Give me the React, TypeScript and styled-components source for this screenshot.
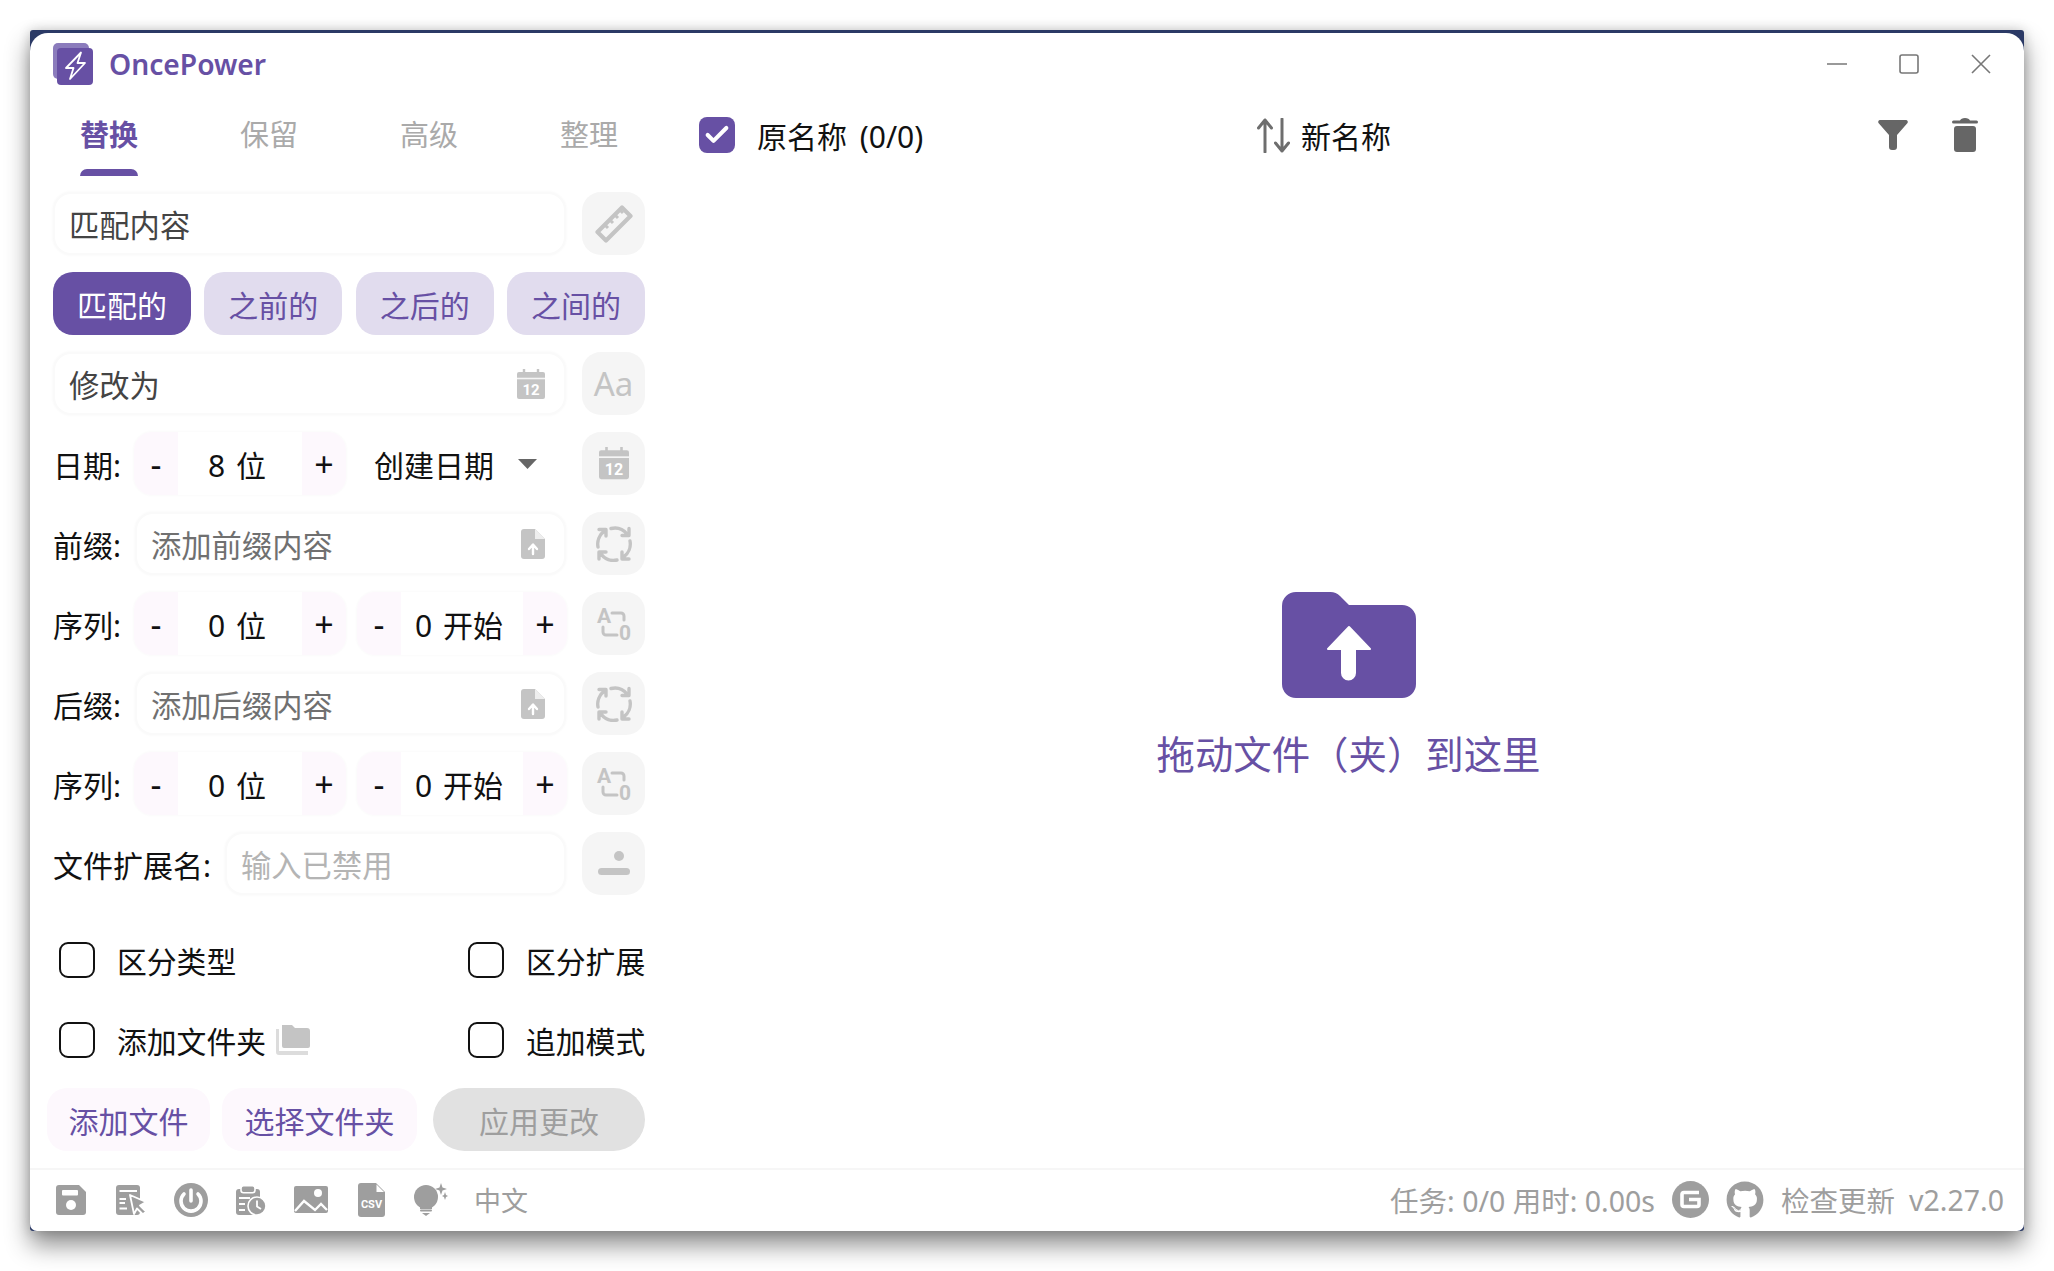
import React from 'react'
import styled, { createGlobalStyle } from 'styled-components'
import { FaGithub } from 'react-icons/fa'
import { Check } from 'lucide-react'

const PURPLE = '#6750a4'
const ICON_GREY = '#c4c4c4'
const FOOT_GREY = '#9e9e9e'
const ROW_HEIGHT = '63px'
const UI_FONT = '"Noto Sans", "Noto Sans CJK SC", sans-serif'


const GlobalStyle = createGlobalStyle`
  html, body {
    margin: 0;
    height: 1271px;
    overflow: hidden;
    background: #fff;
    font-family: ${UI_FONT};
  }
  * { box-sizing: border-box; }
`

const Desktop = styled.div`
  padding: 30px;
  height: 1271px;
`

const Frame = styled.div`
  display: flex;
  height: 1201px;
  width: 1994px;
  padding-top: 3px;
  background: #2b3a66;
  border-radius: 3px;
  box-shadow: 0 14px 24px rgba(0, 0, 0, .45), 0 0 12px rgba(0, 0, 0, .18);
`

const Win = styled.div`
  flex: 1;
  display: flex;
  flex-direction: column;
  background: #fff;
  border-radius: 18px 18px 7px 7px;
  overflow: hidden;
`

const TitleBar = styled.header`
  height: 62px;
  flex: none;
  display: flex;
  align-items: center;
  padding: 0 7px 0 23px;
`

const AppName = styled.span`
  margin-left: 16px;
  font-size: 28.2px;
  font-weight: 600;
  color: ${PURPLE};
`

const WinControls = styled.div`
  margin-left: auto;
  display: flex;
`

const WinButton = styled.span`
  width: 72px;
  height: 40px;
  display: flex;
  align-items: center;
  justify-content: center;
`

const Main = styled.div`
  flex: 1;
  display: flex;
  min-height: 0;
`

const Sidebar = styled.aside`
  flex: none;
  width: 615px;
  padding-left: 23px;
  display: flex;
  flex-direction: column;
  gap: 17px;
`

const Tabs = styled.nav`
  display: flex;
  flex: none;
  height: 81px;
  margin: 0 0 -1px -24px;
`

const Tab = styled.div<{ $active?: boolean }>`
  flex: none;
  width: 160px;
  display: flex;
  flex-direction: column;
  align-items: center;
  justify-content: flex-end;
  font-size: 29px;
  line-height: 40px;
  font-weight: ${p => (p.$active ? 700 : 400)};
  color: ${p => (p.$active ? PURPLE : '#aaa')};
`

const TabBar = styled.span<{ $on?: boolean }>`
  width: 58px;
  height: 7px;
  margin-top: 14px;
  border-radius: 7px 7px 0 0;
  background: ${p => (p.$on ? PURPLE : 'transparent')};
`

const Row = styled.div`
  display: flex;
  align-items: center;
  gap: 16px;
  height: ${ROW_HEIGHT};
`

const RowMain = styled.div`
  width: 513px;
  height: 100%;
  display: flex;
  align-items: center;
`

const Label = styled.span`
  flex: none;
  width: 82px;
  font-size: 30px;
  color: #111;
  white-space: nowrap;
`

const WideLabel = styled(Label)`
  width: 172px;
`

const Field = styled.div`
  flex: 1;
  height: 100%;
  display: flex;
  align-items: center;
  justify-content: space-between;
  padding: 0 19px 0 14px;
  background: #fff;
  border: 2px solid #fafafa;
  border-radius: 18px;
  box-shadow: 0 0 3px rgba(0, 0, 0, .04);
`

const FieldText = styled.span<{ $tone?: 'value' | 'hint' | 'off' }>`
  font-size: 30.3px;
  color: ${p => (p.$tone === 'off' ? '#b4b4b4' : p.$tone === 'hint' ? '#707070' : '#444')};
`

const SquareBtn = styled.div`
  flex: none;
  width: 63px;
  height: 63px;
  display: flex;
  align-items: center;
  justify-content: center;
  background: #f5f5f5;
  border-radius: 19px;
  color: ${ICON_GREY};
  font-size: 33px;
`

const Modes = styled.div`
  display: flex;
  justify-content: space-between;
  height: ${ROW_HEIGHT};
`

const Mode = styled.div<{ $active?: boolean }>`
  width: 138px;
  display: flex;
  align-items: center;
  justify-content: center;
  border-radius: 20px;
  font-size: 30px;
  background: ${p => (p.$active ? PURPLE : '#e1dcee')};
  color: ${p => (p.$active ? '#fff' : PURPLE)};
`

const StepperBox = styled.div`
  flex: none;
  width: 212px;
  height: 100%;
  margin-left: -1px;
  display: flex;
  align-items: center;
  border-radius: 18px;
  overflow: hidden;
  background: #fff;
  box-shadow: 0 0 3px rgba(0, 0, 0, .04);
  color: #111;
  font-size: 30px;
  word-spacing: 3px;
`

const StepButton = styled.span`
  flex: none;
  width: 44px;
  height: 100%;
  display: flex;
  align-items: center;
  justify-content: center;
  background: #fdf8fd;
  font-size: 34px;
`

const StepValue = styled.span`
  flex: 1;
  padding-right: 6px;
  text-align: center;
  white-space: nowrap;
`

const SecondStepper = styled(StepperBox)`
  width: 210px;
  margin-left: 11px;
`

const DateSelect = styled.div`
  flex: 1;
  display: flex;
  align-items: center;
  padding-left: 28px;
  font-size: 30px;
  color: #111;
  gap: 24px;
`

const OptionGrid = styled.div`
  margin-top: 16px;
  display: grid;
  grid-template-columns: 409px 1fr;
  row-gap: 17px;
`

const Option = styled.label`
  height: ${ROW_HEIGHT};
  display: flex;
  align-items: center;
  gap: 22px;
  padding-left: 6px;
  font-size: 29.8px;
  color: #111;
  white-space: nowrap;
`

const Box = styled.span`
  flex: none;
  width: 36px;
  height: 36px;
  border: 2.5px solid #111;
  border-radius: 9px;
`

const OptionIcon = styled.span`
  display: flex;
  margin-left: -12px;
`

const Actions = styled.div`
  height: ${ROW_HEIGHT};
  display: flex;
  margin-left: -6px;
  gap: 12px;
`

const ActionBtn = styled.div<{ $width: number }>`
  width: ${p => p.$width}px;
  display: flex;
  align-items: center;
  justify-content: center;
  border-radius: 20px;
  background: #fdf8fd;
  color: ${PURPLE};
  font-size: 30px;
`

const ApplyBtn = styled.div`
  width: 212px;
  margin-left: 4px;
  display: flex;
  align-items: center;
  justify-content: center;
  border-radius: 32px;
  background: #e1e1e1;
  color: #9e9e9e;
  font-size: 30px;
`

const Content = styled.section`
  flex: 1;
  display: flex;
  flex-direction: column;
  min-width: 0;
`

const ListHead = styled.div`
  height: 81px;
  flex: none;
  display: flex;
  align-items: flex-start;
  padding: 22px 46px 0 54px;
`

const HeadCol = styled.div`
  display: flex;
  align-items: center;
  height: 36px;
  font-size: 30px;
  color: #111;
`

const OriginCol = styled(HeadCol)`
  width: 558px;
  gap: 22px;
  word-spacing: 5px;
`

const NewCol = styled(HeadCol)`
  flex: 1;
  gap: 11px;
`

const HeadTools = styled(HeadCol)`
  gap: 44px;
`

const CheckedBox = styled.span`
  width: 36px;
  height: 36px;
  display: flex;
  align-items: center;
  justify-content: center;
  border-radius: 8px;
  background: ${PURPLE};
`

const DropZone = styled.div`
  flex: 1;
  display: flex;
  flex-direction: column;
  align-items: center;
  justify-content: center;
  padding: 27px 0 0 28px;
  gap: 26px;
  color: ${PURPLE};
  font-size: 38.4px;
`

const Footer = styled.footer`
  flex: none;
  height: 63px;
  display: flex;
  align-items: center;
  padding: 0 20px 2px 11px;
  border-top: 2px solid #f6f6f6;
  color: ${FOOT_GREY};
  font-size: 28.5px;
`

const FootIcon = styled.span`
  width: 60px;
  display: flex;
  justify-content: center;
`

const Lang = styled.span`
  margin-left: 13px;
  font-size: 27px;
`

const FootRight = styled.div`
  margin-left: auto;
  display: flex;
  align-items: center;
  gap: 17px;
`

const Version = styled.span`
  margin-left: -3px;
`


function LogoIcon() {
  return (
    <svg width="40" height="42" viewBox="0 0 40 42">
      <rect x="0" y="0" width="36" height="36" rx="5" fill="#8b7cbc" />
      <rect x="4" y="5" width="36" height="37" rx="4" fill={PURPLE} />
      <path d="M28 9.5 L13 25 H20.5 L17 36 L32 20 H24.5 Z" fill="none" stroke="#fff" strokeWidth="1.8" strokeLinejoin="round" />
    </svg>
  )
}

function CalendarIcon({ size = 28 }: { size?: number }) {
  return (
    <svg width={size} height={size * 30 / 28} viewBox="0 0 28 30">
      <rect x="0" y="3" width="28" height="27" rx="2" fill={ICON_GREY} />
      <path d="M0 9.5 H28" stroke="#f5f5f5" strokeWidth="1.6" />
      <path d="M7 0 V6 M21 0 V6" stroke={ICON_GREY} strokeWidth="2.4" />
      <text x="14" y="26" textAnchor="middle" fontSize="15" fontWeight="700" fontFamily="Roboto, sans-serif" fill="#fff">12</text>
    </svg>
  )
}

function RulerIcon() {
  return (
    <svg width="38" height="38" viewBox="0 0 38 38" fill="none" stroke={ICON_GREY} strokeWidth="4.2" strokeLinejoin="round">
      <path d="M2.5 27 L27 2.5 L35.5 11 L11 35.5 Z" />
      <path d="M10 20 L13 23 M15 15 L18 18 M20 10 L23 13 M25 5 L28 8" strokeWidth="3" />
    </svg>
  )
}

function FileUpIcon() {
  return (
    <svg width="24" height="30" viewBox="0 0 24 30">
      <path d="M3 0 H14 L24 10 V27 A3 3 0 0 1 21 30 H3 A3 3 0 0 1 0 27 V3 A3 3 0 0 1 3 0 Z" fill={ICON_GREY} />
      <path d="M14 0 V10 H24 Z" fill="#eee" />
      <path d="M12 25 V16 M8 20 L12 15.5 L16 20" stroke="#fff" strokeWidth="2.4" fill="none" strokeLinecap="round" strokeLinejoin="round" />
    </svg>
  )
}

function CycleIcon() {
  return (
    <svg width="36" height="36" viewBox="0 0 36 36" fill="none" stroke={ICON_GREY} strokeWidth="3.4" strokeLinecap="round" strokeLinejoin="round">
      <path d="M15 2.5 A16 16 0 0 1 31 8 M33 2.5 V9.5 H26" />
      <path d="M2 21 A16 16 0 0 1 8.5 5 M3 3.5 H10 V10" />
      <path d="M21 34 A16 16 0 0 1 5 28 M3 33 V26 H10" />
      <path d="M34 15 A16 16 0 0 1 27.5 31 M33 33 H26 V26" />
    </svg>
  )
}

// the viewBox leaves room around the letters so their line boxes stay inside
function SequenceIcon() {
  return (
    <svg width="38" height="48" viewBox="-2 -6 38 48" fill="none" stroke={ICON_GREY} strokeWidth="3" strokeLinecap="round">
      <text x="0" y="17" fontSize="21" fontWeight="700" fontFamily="Roboto, sans-serif" fill={ICON_GREY} stroke="none">A</text>
      <path d="M15 7 H24 A3 3 0 0 1 27 10 V14" />
      <path d="M6 21 V26 A3 3 0 0 0 9 29 H20" />
      <text x="22" y="34" fontSize="21" fontWeight="700" fontFamily="Roboto, sans-serif" fill={ICON_GREY} stroke="none">0</text>
    </svg>
  )
}

function ExtIcon() {
  return (
    <svg width="34" height="26" viewBox="0 0 34 26" fill={ICON_GREY}>
      <circle cx="22" cy="5" r="5" />
      <rect x="1" y="17" width="32" height="7" rx="3.5" />
    </svg>
  )
}

function FoldersIcon() {
  return (
    <svg width="34" height="30" viewBox="0 0 34 30" fill={ICON_GREY}>
      <path d="M6 0 H16 L19 3 H31 A3 3 0 0 1 34 6 V21 A2 2 0 0 1 32 23 H8 A2 2 0 0 1 6 21 Z" />
      <path d="M0 4 H3 V26 H32 V30 H3 A3 3 0 0 1 0 27 Z" opacity=".6" />
    </svg>
  )
}

function SortIcon() {
  return (
    <svg width="33" height="35" viewBox="0 0 33 35" fill="none" stroke="#6e6e6e" strokeWidth="3" strokeLinecap="round" strokeLinejoin="round">
      <path d="M8 34 V2 M1.5 10 L8 2 L14.5 10" />
      <path d="M25 1 V33 M18.5 25 L25 33 L31.5 25" />
    </svg>
  )
}

function FilterIcon() {
  return (
    <svg width="30" height="30" viewBox="0 0 30 30" fill="#666">
      <path d="M2 0 H28 A2 2 0 0 1 29.5 3 L19 15 V27 A3 3 0 0 1 16 30 H14 A3 3 0 0 1 11 27 V15 L0.5 3 A2 2 0 0 1 2 0 Z" />
    </svg>
  )
}

function TrashIcon() {
  return (
    <svg width="26" height="34" viewBox="0 0 26 34" fill="#666">
      <path d="M1.5 2.5 H8 Q9 0 13 0 Q17 0 18 2.5 H24.5 A1.5 1.5 0 0 1 24.5 5.5 H1.5 A1.5 1.5 0 0 1 1.5 2.5 Z" />
      <rect x="2" y="8" width="22" height="26" rx="3" />
    </svg>
  )
}

function FolderUpIcon() {
  return (
    <svg width="134" height="106" viewBox="0 0 134 106">
      <path d="M14 0 H48 A14 14 0 0 1 58 4 L67 13 H120 A14 14 0 0 1 134 27 V92 A14 14 0 0 1 120 106 H14 A14 14 0 0 1 0 92 V14 A14 14 0 0 1 14 0 Z" fill={PURPLE} />
      <path d="M67 35 L88 57 H73 V81 A6 6 0 0 1 60 81 V57 H46 Z" fill="#fff" stroke="#fff" strokeWidth="2" strokeLinejoin="round" />
    </svg>
  )
}

function SaveIcon() {
  return (
    <svg width="30" height="30" viewBox="0 0 30 30">
      <path d="M3 0 H23 L30 7 V27 A3 3 0 0 1 27 30 H3 A3 3 0 0 1 0 27 V3 A3 3 0 0 1 3 0 Z" fill={FOOT_GREY} />
      <rect x="6" y="5" width="16" height="5.5" rx="1" fill="#fff" />
      <circle cx="15" cy="20" r="5" fill="#fff" />
    </svg>
  )
}

function PickListIcon() {
  return (
    <svg width="30" height="30" viewBox="0 0 30 30">
      <rect x="0" y="0" width="24" height="30" rx="3" fill={FOOT_GREY} />
      <path d="M3.5 6 H21 M3.5 14 H10 M3.5 18 H9 M3.5 23.5 H11" stroke="#fff" strokeWidth="2" />
      <path d="M14 10 L30 17 L24 20.5 L30 26.5 L27 29.5 L21 23.5 L18 29 Z" fill={FOOT_GREY} stroke="#fff" strokeWidth="1.8" strokeLinejoin="round" />
    </svg>
  )
}

function PowerIcon() {
  return (
    <svg width="34" height="34" viewBox="0 0 34 34">
      <circle cx="17" cy="17" r="17" fill={FOOT_GREY} />
      <path d="M10 11 A10 10 0 1 0 24 11 M17 7 V18" fill="none" stroke="#fff" strokeWidth="3.6" strokeLinecap="round" />
    </svg>
  )
}

function ClipboardClockIcon() {
  return (
    <svg width="30" height="30" viewBox="0 0 30 30">
      <rect x="0" y="4" width="24" height="26" rx="3" fill={FOOT_GREY} />
      <rect x="5" y="0.8" width="14" height="7" rx="2.5" fill={FOOT_GREY} stroke="#fff" strokeWidth="1.6" />
      <path d="M3 13 H14 M3 19 H9 M3 25 H9" stroke="#fff" strokeWidth="2" />
      <circle cx="21" cy="21" r="9" fill={FOOT_GREY} stroke="#fff" strokeWidth="1.6" />
      <path d="M21 15.5 V21.5 L25 24" fill="none" stroke="#fff" strokeWidth="1.8" />
    </svg>
  )
}

function PictureIcon() {
  return (
    <svg width="34" height="27" viewBox="0 0 34 27">
      <rect x="0" y="0" width="34" height="27" rx="2" fill={FOOT_GREY} />
      <circle cx="24" cy="7" r="4" fill="#fff" />
      <path d="M1 25 L10 15 L21 24 L27 18 L33 24" fill="none" stroke="#fff" strokeWidth="2.4" />
    </svg>
  )
}

function CsvIcon() {
  return (
    <svg width="27" height="34" viewBox="0 0 27 34">
      <path d="M3 0 H18 L27 9 V31 A3 3 0 0 1 24 34 H3 A3 3 0 0 1 0 31 V3 A3 3 0 0 1 3 0 Z" fill={FOOT_GREY} />
      <path d="M18.5 1.5 V9 H26 Z" fill="#fff" />
      <text x="13.5" y="25" textAnchor="middle" fontSize="11" fontWeight="700" fontFamily="Roboto, sans-serif" fill="#fff">CSV</text>
    </svg>
  )
}

function IdeaIcon() {
  return (
    <svg width="34" height="33" viewBox="0 0 34 33" fill={FOOT_GREY}>
      <circle cx="12" cy="14" r="12" />
      <rect x="6" y="22" width="12" height="4" />
      <rect x="6" y="26.5" width="12" height="2" rx="1" />
      <path d="M8 30 H16 L12 33 Z" />
      <path d="M27 0 L28.5 4.5 L33 6 L28.5 7.5 L27 12 L25.5 7.5 L21 6 L25.5 4.5 Z" />
      <path d="M31 9 L32 12 L34 13 L32 14 L31 17 L30 14 L28 13 L30 12 Z" />
    </svg>
  )
}

function GiteeIcon() {
  return (
    <svg width="37" height="37" viewBox="0 0 37 37">
      <circle cx="18.5" cy="18.5" r="18.5" fill={FOOT_GREY} />
      <path d="M27 11.5 H12 Q10 11.5 10 13.5 V23.5 Q10 25.5 12 25.5 H25 Q27 25.5 27 23.5 V18.5 H17" fill="none" stroke="#fff" strokeWidth="3.6" />
    </svg>
  )
}

function MinIcon() {
  return (
    <svg width="20" height="20" viewBox="0 0 20 20">
      <path d="M0 10 H20" stroke="#777" strokeWidth="1.6" />
    </svg>
  )
}

function MaxIcon() {
  return (
    <svg width="20" height="20" viewBox="0 0 20 20">
      <rect x="1" y="1" width="18" height="18" rx="2" fill="none" stroke="#777" strokeWidth="1.6" />
    </svg>
  )
}

function CloseIcon() {
  return (
    <svg width="20" height="20" viewBox="0 0 20 20">
      <path d="M1 1 L19 19 M19 1 L1 19" stroke="#777" strokeWidth="1.6" />
    </svg>
  )
}

function CaretIcon() {
  return (
    <svg width="19" height="10" viewBox="0 0 19 10">
      <path d="M0 0 H19 L9.5 10 Z" fill="#666" />
    </svg>
  )
}


function Stepper({ value, Wrap = StepperBox }: { value: string; Wrap?: typeof StepperBox }) {
  return (
    <Wrap>
      <StepButton>-</StepButton>
      <StepValue>{value}</StepValue>
      <StepButton>+</StepButton>
    </Wrap>
  )
}

const TABS = ['替换', '保留', '高级', '整理']
const MODES = ['匹配的', '之前的', '之后的', '之间的']

export default function App() {
  return (
    <Desktop>
      <GlobalStyle />
      <Frame>
        <Win>
          <TitleBar>
            <LogoIcon />
            <AppName>OncePower</AppName>
            <WinControls>
              <WinButton><MinIcon /></WinButton>
              <WinButton><MaxIcon /></WinButton>
              <WinButton><CloseIcon /></WinButton>
            </WinControls>
          </TitleBar>

          <Main>
            <Sidebar>
              <Tabs>
                {TABS.map((t, i) =>
                  <Tab key={t} $active={i === 0}>
                    {t}
                    <TabBar $on={i === 0} />
                  </Tab>
                )}
              </Tabs>

              <Row>
                <RowMain>
                  <Field><FieldText>匹配内容</FieldText></Field>
                </RowMain>
                <SquareBtn><RulerIcon /></SquareBtn>
              </Row>

              <Modes>
                {MODES.map((m, i) => <Mode key={m} $active={i === 0}>{m}</Mode>)}
              </Modes>

              <Row>
                <RowMain>
                  <Field><FieldText>修改为</FieldText><CalendarIcon /></Field>
                </RowMain>
                <SquareBtn>Aa</SquareBtn>
              </Row>

              <Row>
                <RowMain>
                  <Label>日期:</Label>
                  <Stepper value="8 位" />
                  <DateSelect>创建日期<CaretIcon /></DateSelect>
                </RowMain>
                <SquareBtn><CalendarIcon size={30} /></SquareBtn>
              </Row>

              <Row>
                <RowMain>
                  <Label>前缀:</Label>
                  <Field><FieldText $tone="hint">添加前缀内容</FieldText><FileUpIcon /></Field>
                </RowMain>
                <SquareBtn><CycleIcon /></SquareBtn>
              </Row>

              <Row>
                <RowMain>
                  <Label>序列:</Label>
                  <Stepper value="0 位" />
                  <Stepper value="0 开始" Wrap={SecondStepper} />
                </RowMain>
                <SquareBtn><SequenceIcon /></SquareBtn>
              </Row>

              <Row>
                <RowMain>
                  <Label>后缀:</Label>
                  <Field><FieldText $tone="hint">添加后缀内容</FieldText><FileUpIcon /></Field>
                </RowMain>
                <SquareBtn><CycleIcon /></SquareBtn>
              </Row>

              <Row>
                <RowMain>
                  <Label>序列:</Label>
                  <Stepper value="0 位" />
                  <Stepper value="0 开始" Wrap={SecondStepper} />
                </RowMain>
                <SquareBtn><SequenceIcon /></SquareBtn>
              </Row>

              <Row>
                <RowMain>
                  <WideLabel>文件扩展名:</WideLabel>
                  <Field><FieldText $tone="off">输入已禁用</FieldText></Field>
                </RowMain>
                <SquareBtn><ExtIcon /></SquareBtn>
              </Row>

              <OptionGrid>
                <Option><Box />区分类型</Option>
                <Option><Box />区分扩展</Option>
                <Option><Box />添加文件夹<OptionIcon><FoldersIcon /></OptionIcon></Option>
                <Option><Box />追加模式</Option>
              </OptionGrid>

              <Actions>
                <ActionBtn $width={163}>添加文件</ActionBtn>
                <ActionBtn $width={195}>选择文件夹</ActionBtn>
                <ApplyBtn>应用更改</ApplyBtn>
              </Actions>
            </Sidebar>

            <Content>
              <ListHead>
                <OriginCol>
                  <CheckedBox><Check size={28} color="#fff" strokeWidth={3.5} /></CheckedBox>
                  原名称 (0/0)
                </OriginCol>
                <NewCol><SortIcon />新名称</NewCol>
                <HeadTools><FilterIcon /><TrashIcon /></HeadTools>
              </ListHead>
              <DropZone>
                <FolderUpIcon />
                拖动文件（夹）到这里
              </DropZone>
            </Content>
          </Main>

          <Footer>
            <FootIcon><SaveIcon /></FootIcon>
            <FootIcon><PickListIcon /></FootIcon>
            <FootIcon><PowerIcon /></FootIcon>
            <FootIcon><ClipboardClockIcon /></FootIcon>
            <FootIcon><PictureIcon /></FootIcon>
            <FootIcon><CsvIcon /></FootIcon>
            <FootIcon><IdeaIcon /></FootIcon>
            <Lang>中文</Lang>
            <FootRight>
              <span>任务: 0/0 用时: 0.00s</span>
              <GiteeIcon />
              <FaGithub size={38} color={FOOT_GREY} />
              <span>检查更新</span>
              <Version>v2.27.0</Version>
            </FootRight>
          </Footer>
        </Win>
      </Frame>
    </Desktop>
  )
}
